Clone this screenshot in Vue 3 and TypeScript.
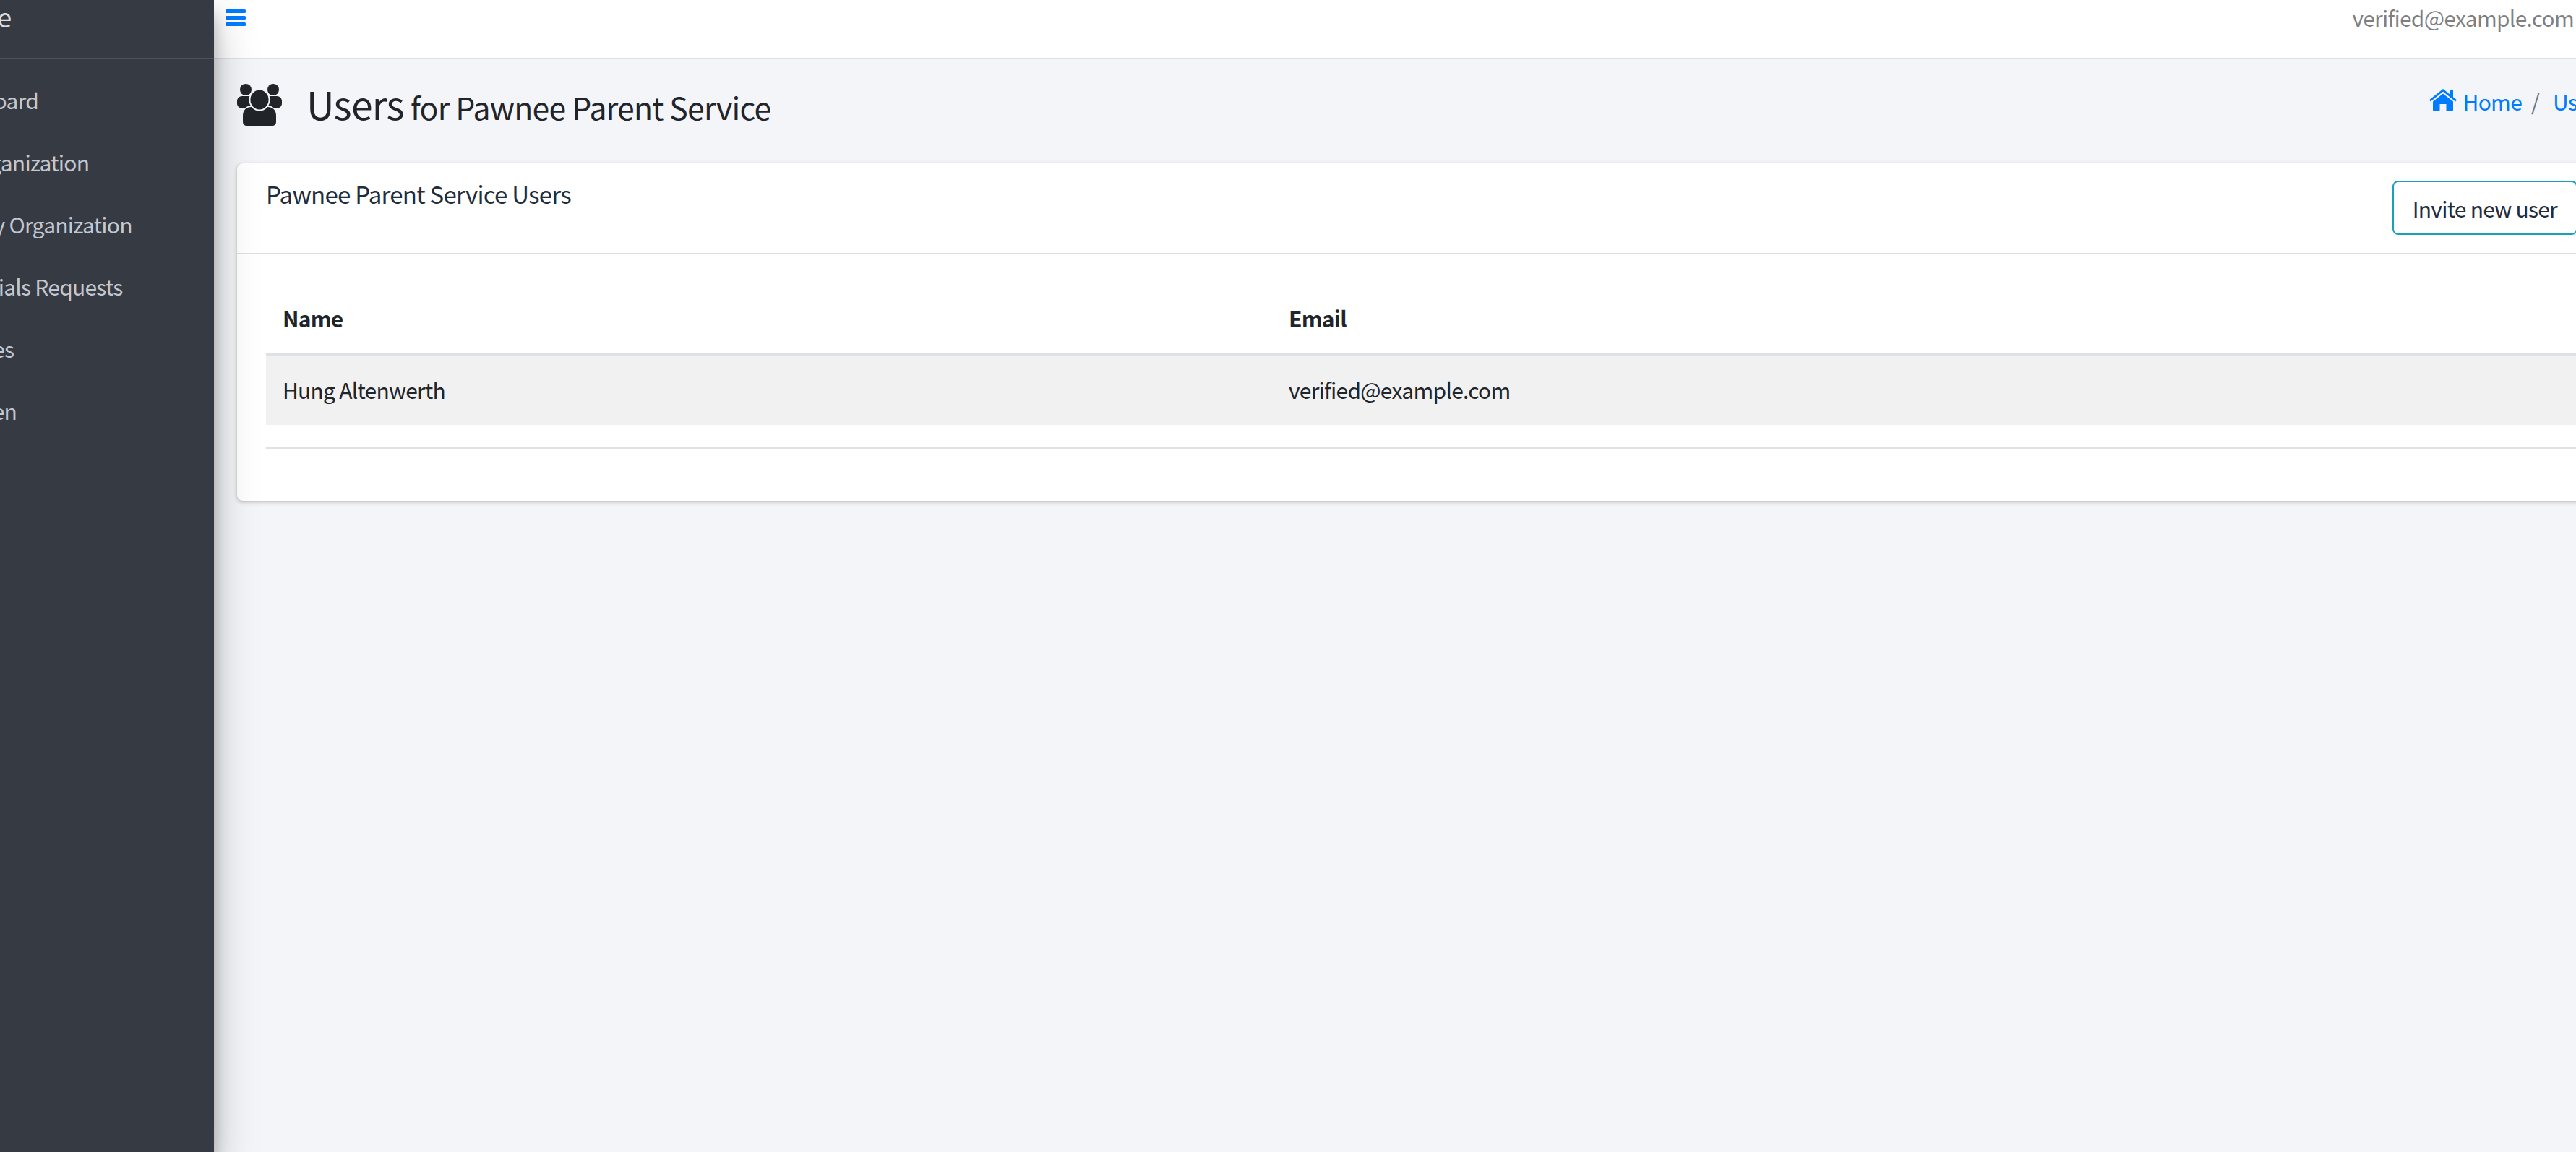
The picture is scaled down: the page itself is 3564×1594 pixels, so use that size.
<script setup lang="ts">
interface NavItem { label: string; offset: number }
const nav: NavItem[] = [
  { label: 'Dashboard', offset: -93 },
  { label: 'Organization', offset: -47 },
  { label: 'My Organization', offset: -32 },
  { label: 'Credentials Requests', offset: -109 },
  { label: 'Roles', offset: -53 },
  { label: 'Token', offset: -58 },
]
</script>

<template>
  <div class="page">
    <aside class="sidebar">
      <div class="brand"><span class="brand-text">Pawnee</span></div>
      <nav class="nav">
        <a v-for="item in nav" :key="item.label" class="nav-link" :style="{ marginLeft: item.offset + 'px' }">{{ item.label }}</a>
      </nav>
    </aside>
    <main class="main">
      <header class="topbar">
        <svg class="bars" viewBox="0 0 28 23" aria-hidden="true">
          <rect x="0" y="0" width="28" height="5" rx="1.500" />
          <rect x="0" y="9" width="28" height="5" rx="1.500" />
          <rect x="0" y="18" width="28" height="5" rx="1.500" />
        </svg>
        <span class="user-email">verified@example.com</span>
      </header>
      <section class="content">
        <div class="content-header">
          <h1 class="title">
            <svg class="users-icon" viewBox="0 0 62 58" aria-hidden="true">
              <circle cx="12" cy="8" r="8" />
              <circle cx="50" cy="8" r="8" />
              <path d="M0 24c0-4 3-7 7-7h10c5 0 8 4 8 9v8H8c-5 0-8-3-8-7z" />
              <path d="M62 24c0-4-3-7-7-7H45c-5 0-8 4-8 9v8h17c5 0 8-3 8-7z" />
              <path class="gap" d="M7 58V44c0-9 6-14 13-14h22c7 0 13 5 13 14v14z" />
              <path d="M8 52V44c0-8 5-12 12-12h22c7 0 12 4 12 12v8c0 4-2 6-6 6H14c-4 0-6-2-6-6z" />
              <ellipse class="gap" cx="31" cy="22" rx="14.500" ry="15.500" />
              <ellipse cx="31" cy="22" rx="12.600" ry="13.500" />
            </svg>
            <span class="title-main">Users</span>
            <small class="title-sub">for Pawnee Parent Service</small>
          </h1>
          <ol class="breadcrumb">
            <li class="crumb">
              <svg class="home-icon" viewBox="0 0 38 31" aria-hidden="true">
                <path d="M19 0 28 7.200V2h5v9.200l5 4-1.800 2.200L19 3.800 1.800 17.400 0 15.200z" />
                <path d="M19 6.500 33 17.500V29c0 1.100-.9 2-2 2h-7.500V21h-9v10H7c-1.100 0-2-.9-2-2V17.500z" />
              </svg>
              <span>Home</span>
            </li>
            <li class="sep">/</li>
            <li class="crumb">Users</li>
          </ol>
        </div>
        <div class="card">
          <div class="card-header">
            <h3 class="card-title">Pawnee Parent Service Users</h3>
            <button class="invite" type="button">Invite new user</button>
          </div>
          <div class="card-body">
            <table class="table">
              <thead>
                <tr><th class="col-name">Name</th><th>Email</th></tr>
              </thead>
              <tbody>
                <tr><td>Hung Altenwerth</td><td>verified@example.com</td></tr>
              </tbody>
            </table>
          </div>
        </div>
      </section>
    </main>
  </div>
</template>

<style>
html, body { margin: 0; padding: 0; overflow: hidden; }
</style>

<style scoped>
.page {
  display: flex;
  width: 3564px;
  height: 1594px;
  overflow: hidden;
  background: #f4f5f9;
  font-family: "Noto Sans CJK SC", "Noto Sans", sans-serif;
  font-size: 30px;
  letter-spacing: -0.025em;
  color: #212529;
}
.sidebar {
  position: relative;
  z-index: 2;
  flex: 0 0 296px;
  background: #353a43;
  box-shadow: 0 28px 56px rgba(0, 0, 0, .25), 0 20px 20px rgba(0, 0, 0, .22);
  overflow: hidden;
  clip-path: inset(0 -100px 0 0);
}
.brand {
  box-sizing: border-box;
  height: 82px;
  margin-left: -112px;
  border-bottom: 2px solid #4b545c;
  color: #d9dce0;
  font-size: 36px;
  line-height: 44px;
}
.brand-text { display: block; width: 400px; }
.nav { display: flex; flex-direction: column; padding-top: 13px; }
.nav-link {
  display: block;
  height: 86px;
  line-height: 86px;
  white-space: nowrap;
  color: #c2c7d0;
}
.main { flex: 1 1 0; min-width: 0; display: flex; flex-direction: column; }
.topbar {
  box-sizing: border-box;
  flex: 0 0 82px;
  display: flex;
  align-items: flex-start;
  justify-content: space-between;
  padding: 0 3px 0 16px;
  background: #fff;
  border-bottom: 2px solid #dee2e6;
}
.bars { width: 28px; height: 23px; margin-top: 13px; fill: #007bff; }
.user-email { color: rgba(0, 0, 0, .5); line-height: 48px; }
.content { flex: 1; padding-left: 32px; margin-right: -42px; }
.content-header {
  display: flex;
  align-items: flex-start;
  justify-content: space-between;
  height: 144px;
}
.title { display: flex; align-items: baseline; margin: 0; font-weight: 400; padding-top: 26px; }
.users-icon { width: 62px; height: 58px; margin-right: 34px; fill: #212529; align-self: flex-start; margin-top: 8px; }
.users-icon .gap { fill: #f4f5f9; }
.title-main { font-size: 53.500px; line-height: 70px; margin-right: 9px; }
.title-sub { font-size: 42.700px; }
.breadcrumb { display: flex; margin: 0; padding: 0; list-style: none; padding-top: 34px; }
.crumb { display: flex; align-items: center; gap: 9px; color: #007bff; line-height: 48px; height: 48px; }
.sep { color: #6c757d; line-height: 48px; padding: 0 19px 0 13px; }
.home-icon { width: 38px; height: 31px; fill: #007bff; margin-top: -4px; }
.card {
  background: #fff;
  border-radius: 8px;
  box-shadow: 0 0 2px rgba(0, 0, 0, .125), 0 2px 6px rgba(0, 0, 0, .2);
}
.card-header {
  box-sizing: border-box;
  display: flex;
  justify-content: space-between;
  align-items: flex-start;
  height: 126px;
  padding: 24px 40px 0;
  border-bottom: 2px solid rgba(0, 0, 0, .125);
}
.card-title { margin: 0; font-size: 33px; font-weight: 400; color: #1f2d3d; line-height: 36px; }
.invite {
  height: 75px;
  margin: 0;
  padding: 0 26px;
  background: transparent;
  border: 2px solid #17a2b8;
  border-radius: 8px;
  font: inherit;
  letter-spacing: inherit;
  color: #1f2d3d;
}
.card-body { padding: 40px 40px 72px; }
.table { width: 100%; border-collapse: collapse; border-bottom: 2px solid #dee2e6; }
.table th { text-align: left; font-weight: 700; padding: 23px 24px 24px 23px; line-height: 48px; height: 98px; box-sizing: border-box; border-bottom: 4px solid #dee2e6; }
.table .col-name { width: 1392px; box-sizing: border-box; }
.table td { padding: 23px 24px 25px 23px; line-height: 48px; height: 96px; box-sizing: border-box; background: #f1f1f2; }
.table tbody::after { content: ""; display: table-row; height: 32px; }
</style>
